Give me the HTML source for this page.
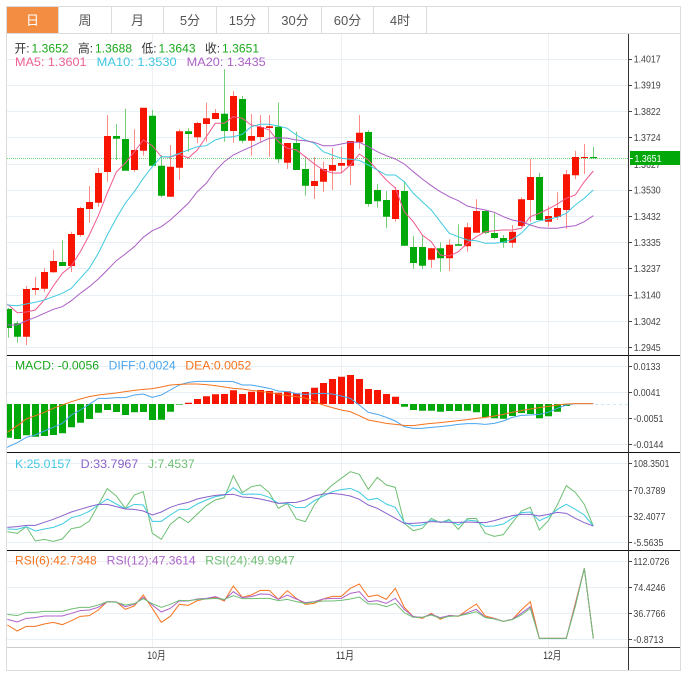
<!DOCTYPE html>
<html><head><meta charset="utf-8"><style>
html,body{margin:0;padding:0;background:#fff;width:690px;height:676px;overflow:hidden}
svg{display:block}
text{font-family:"Liberation Sans","Noto Sans CJK SC",sans-serif}
.t{font-size:13px;fill:#555;text-anchor:middle}
.l{font-size:12px}
.a{font-size:10px;fill:#444}
polyline{fill:none}
.n polyline{vector-effect:non-scaling-stroke;stroke-width:1}
</style></head><body>
<svg width="690" height="676" viewBox="0 0 690 676" xmlns="http://www.w3.org/2000/svg">
<defs><clipPath id="c"><rect x="7" y="34" width="621" height="613"/></clipPath></defs>
<rect x="6.5" y="6.5" width="674" height="664" fill="#fff" stroke="#dcdcdc"/>
<rect x="7" y="7" width="51" height="26" fill="#f38d42"/>
<path d="M7 33.5H680M58.5 7V33M111.5 7V33M163.5 7V33M216.5 7V33M268.5 7V33M321.5 7V33M373.5 7V33M426.5 7V33" stroke="#dcdcdc" fill="none"/>
<text x="32.5" y="25" class="t" style="fill:#fff">日</text>
<text x="85" y="25" class="t">周</text>
<text x="137.5" y="25" class="t">月</text>
<text x="190" y="25" class="t">5分</text>
<text x="242.5" y="25" class="t">15分</text>
<text x="295" y="25" class="t">30分</text>
<text x="347.5" y="25" class="t">60分</text>
<text x="400" y="25" class="t">4时</text>

<path d="M7 59.5H628M7 85.5H628M7 111.5H628M7 137.5H628M7 164.5H628M7 190.5H628M7 216.5H628M7 242.5H628M7 268.5H628M7 295.5H628M7 321.5H628M7 347.5H628M7 366.5H628M7 392.5H628M7 418.5H628M7 444.5H628M7 463.5H628M7 490.5H628M7 516.5H628M7 542.5H628M7 561.5H628M7 587.5H628M7 613.5H628M7 639.5H628" stroke="#e8eff5" fill="none"/>
<path d="M152.5 34V647M341.5 34V647M548.5 34V647" stroke="#edf1f5" fill="none"/>
<path d="M7 158.5H628" stroke="#6fd36f" stroke-dasharray="1 1" fill="none"/>
<path d="M595 404.5H628" stroke="#cfe8f8" stroke-dasharray="3 3" fill="none"/>

<g clip-path="url(#c)">
<path fill="none" stroke="#74d078" d="M8.5 308V337.7M17.5 321.3V342.7M62.5 240V266M116.5 124V160M125.5 108.7V170.7M152.5 110V165.7M161.5 155V197.3M188.5 128.3V151.7M224.5 69.3V141.7M242.5 96V143.3M278.5 102.7V163.3M296.5 131.7V170M305.5 156.7V195.7M368.5 130V206.7M377.5 184V207.7M386.5 191V228.3M404.5 181V245.7M413.5 235.7V269M422.5 235V269M440.5 242.3V271.7M458.5 224.3V245.7M485.5 210V234.3M494.5 213.3V239.3M503.5 235V247.7M539.5 172.7V220M593.5 146.7V157.7"/>
<path fill="none" stroke="#fb8b84" d="M26.5 286V345M35.5 277V295M44.5 268.3V291.7M53.5 250V272.7M71.5 231.7V272M80.5 206.7V236.7M89.5 186V222.7M98.5 167.7V206.7M107.5 115V181.7M134.5 129.3V171.7M143.5 107.7V155.7M170.5 145V196.7M179.5 129.3V180M197.5 121.7V143.3M206.5 102.7V141.7M215.5 109V119M233.5 91V142.7M251.5 114V155.7M260.5 115V141.7M269.5 115V156.7M287.5 143V169M314.5 157V199M323.5 161.7V191.7M332.5 148V190M341.5 147V172.7M350.5 141V185M359.5 115V149M395.5 187V221.7M431.5 247.7V268M449.5 239.3V271M467.5 222.7V251.7M476.5 199.3V232.7M512.5 225V247.7M521.5 197.3V226.7M530.5 159V221.7M548.5 206V226.7M557.5 192.3V220M566.5 170V229M575.5 150.7V179.3M584.5 144V174"/>
<path fill="none" stroke="#00a80a" stroke-width="7" d="M8.5 309V328M17.5 323.3V336.7M62.5 262V266M116.5 136V138.7M125.5 139V170.7M152.5 115.7V165.7M161.5 165.7V195.7M188.5 131.3V134M224.5 113.7V131M242.5 99V140.7M278.5 126.7V159.3M296.5 143V170M305.5 169V185.7M368.5 132V204M377.5 190V201.3M386.5 200V216.7M404.5 191V245.7M413.5 247V263M422.5 247V265.7M440.5 248.3V258.3M458.5 244.3V245.7M485.5 211V232.7M494.5 233V238M503.5 238V242.7M539.5 177V220M593.5 157V158.2"/>
<path fill="none" stroke="#f71400" stroke-width="7" d="M26.5 289V336.7M35.5 288V290M44.5 272V288.7M53.5 261V272.3M71.5 234V266M80.5 208V235M89.5 202V209M98.5 173V202.7M107.5 136V172M134.5 150V170M143.5 107.7V150.7M170.5 166.7V196.7M179.5 131.3V167.7M197.5 123V137.3M206.5 118.3V124M215.5 113V119M233.5 96V131M251.5 136V140.7M260.5 127V137M269.5 126.3V128M287.5 143V162.7M314.5 181V186M323.5 169V181.7M332.5 165V170.7M341.5 163V165.7M350.5 141V165.7M359.5 132.7V142.3M395.5 190V219M431.5 248.3V259.7M449.5 244.7V258.3M467.5 227.3V246.3M476.5 211V232.7M512.5 231.7V242.7M521.5 199.3V226M530.5 177V200M548.5 216V221.7M557.5 208V217M566.5 174.3V210M575.5 157V175.3M584.5 157V158"/>

<g transform="translate(.3 0)">
<polyline stroke="#ef5a8f" points="7,304 17,312.7 26,312 35,310 44,300 53,286 62,273.3 71,266 80,251.7 89,235 98,215.7 107,193 116,172 125,163 134,152 143,140 152,145.7 161,156.7 170,157.3 179,154 188,158 197,150 206,136.7 215,123.3 224,123.3 233,116.7 242,118.3 251,125 260,126.7 269,130 278,141.7 287,148.3 296,150 305,156.7 314,164 323,170 332,173 341,173 350,165 359,154 368,160 377,170 386,180 395,188 404,211.7 413,221.7 422,235 431,241.7 440,255 449,256 458,251.7 467,243.3 476,236.7 485,231.7 494,230.7 503,230 512,230 521,228.3 530,216.7 539,213.3 548,209 557,204 566,198.3 575,195 584,181.7 593,171"/>
<polyline stroke="#3fcbe0" points="7,305 17,305.7 26,304 35,302.3 44,300 53,296.7 62,293.3 71,288.3 80,278.3 89,268.3 98,253.3 107,235 116,218.3 125,203.3 134,191.7 143,178.3 152,166.7 161,156.7 170,156.7 179,153.3 188,150 197,146.7 206,145.7 215,140 224,137.3 233,136.7 242,134.3 251,126.7 260,124.3 269,124.3 278,126 287,128.3 296,135 305,140 314,143.3 323,151.7 332,155 341,158.3 350,159.3 359,160.3 368,165 377,170 386,175 395,175 404,181.7 413,193.3 422,201.7 431,210 440,221.7 449,233.3 458,236.7 467,240 476,240.7 485,243.3 494,243.3 503,242.3 512,239.3 521,233.3 530,224 539,220.7 548,219.3 557,217.3 566,213.3 575,205 584,198.3 593,190"/>
<polyline stroke="#ab5fc5" points="7,325 17,325 26,320.7 35,317.3 44,313.3 53,309.3 62,306.7 71,300.7 80,293.3 89,286.7 98,279 107,270 116,260.7 125,254 134,246.7 143,237.3 152,230.7 161,226.7 170,220 179,211.7 188,203.3 197,191.7 206,183.3 215,171 224,161.7 233,155 242,150.7 251,146.7 260,142.3 269,138.3 278,137.7 287,138.3 296,140 305,140.7 314,142.3 323,145.7 332,145.7 341,144 350,142.3 359,142.3 368,146.7 377,151.7 386,155.7 395,159 404,164 413,171.7 422,179 431,185.7 440,191.7 449,196.7 458,200.7 467,206 476,208.3 485,210 494,212.3 503,216.7 512,220 521,221.7 530,225 539,227.7 548,228.3 557,228.3 566,226.7 575,225.7 584,221.7 593,215.7"/>
</g>

<path fill="none" stroke="#00a80a" stroke-width="7" d="M8.5 404V437.7M17.5 404V439M26.5 404V435.3M35.5 404V436.7M44.5 404V436M53.5 404V435M62.5 404V433.3M71.5 404V427.3M80.5 404V422.7M89.5 404V419M98.5 404V412.7M107.5 404V410M116.5 404V412M125.5 404V415M134.5 404V412.3M143.5 404V412M152.5 404V420M161.5 404V419.7M170.5 404V411.7M179.5 404V404.6M404.5 404V406.7M413.5 404V410M422.5 404V410.7M431.5 404V410.7M440.5 404V411.7M449.5 404V411M458.5 404V411M467.5 404V410.7M476.5 404V412.3M485.5 404V417M494.5 404V418.3M503.5 404V418.7M512.5 404V416M521.5 404V413M530.5 404V414M539.5 404V418.3M548.5 404V416.3M557.5 404V411.7M566.5 404V406"/>
<path fill="none" stroke="#f71400" stroke-width="7" d="M188.5 404V402.7M197.5 404V399M206.5 404V396.3M215.5 404V394.3M224.5 404V394M233.5 404V390.3M242.5 404V394M251.5 404V391.7M260.5 404V390M269.5 404V391M278.5 404V392.7M287.5 404V391.3M296.5 404V393.3M305.5 404V392M314.5 404V387.7M323.5 404V383M332.5 404V379M341.5 404V376.7M350.5 404V375M359.5 404V379M368.5 404V389M377.5 404V390M386.5 404V394M395.5 404V396.7"/>

<g class="n" transform="translate(.3 355) scale(1 .33333)">
<polyline stroke="#4aa5ee" points="7,278 8,275 17,263 26,247 35,240 44,228 53,217 62,205 71,180 80,165 89,148 98,130 107,130 116,128 125,128 134,120 143,117 152,127 161,120 170,105 179,90 188,82 197,79 206,79 215,79 224,79 233,80 242,90 251,90 260,95 269,100 278,108 287,110 296,116 305,118 314,116 323,115 332,117 341,123 350,130 359,150 368,172 377,178 386,187 395,198 404,215 413,220 422,220 431,217 440,215 449,212 458,208 467,206 476,206 485,208 494,205 503,198 512,187 521,181 530,180 539,178 548,172 557,160 566,150 575,146 584,146 593,146"/>
<polyline stroke="#f5731e" points="7,232 17,212 26,192 35,182 44,172 53,160 62,150 71,140 80,132 89,125 98,120 107,117 116,114 125,110 134,106 143,103 152,101 161,96 170,90 179,88 188,87 197,87 206,89 215,92 224,96 233,100 242,102 251,106 260,109 269,113 278,117 287,122 296,125 305,129 314,140 323,150 332,158 341,165 350,170 359,182 368,195 377,200 386,205 395,208 404,211 413,212 422,208 431,205 440,203 449,200 458,197 467,194 476,190 485,187 494,183 503,178 512,172 521,167 530,162 539,158 548,154 557,150 566,147 575,146 584,146 593,146"/>
</g>
<g class="n" transform="translate(.3 450) scale(1 .33333)">
<polyline stroke="#6fbf73" points="7,245 17,250 26,230 35,273 44,268 53,274 62,267 71,236 80,231 89,213 98,165 107,116 116,138 125,175 134,135 143,125 152,250 161,268 170,223 179,201 188,218 197,192 206,167 215,150 224,143 233,77 242,128 251,110 260,105 269,128 278,175 287,160 296,207 305,215 314,165 323,130 332,105 341,85 350,65 359,73 368,118 377,82 386,105 395,112 404,220 413,242 422,235 431,205 440,218 449,208 458,238 467,206 476,205 485,250 494,259 503,254 512,218 521,183 530,172 539,240 548,212 557,165 566,107 575,127 584,163 593,228"/>
<polyline stroke="#3fcbe0" points="7,237 17,238 26,230 35,243 44,237 53,232 62,222 71,203 80,196 89,184 98,165 107,147 116,162 125,176 134,163 143,165 152,214 161,214 170,195 179,178 188,178 197,162 206,150 215,140 224,135 233,113 242,133 251,132 260,133 269,142 278,160 287,160 296,173 305,172 314,152 323,138 332,125 341,119 350,115 359,127 368,150 377,145 386,162 395,172 404,217 413,228 422,225 431,210 440,217 449,212 458,225 467,210 476,213 485,229 494,228 503,222 512,205 521,188 530,186 539,212 548,200 557,178 566,163 575,178 584,195 593,228"/>
<polyline stroke="#8a62cc" points="7,232 17,230 26,226 35,226 44,217 53,208 62,197 71,186 80,178 89,170 98,163 107,163 116,170 125,177 134,178 143,183 152,195 161,186 170,172 179,163 188,157 197,147 206,141 215,136 224,134 233,133 242,141 251,143 260,147 269,153 278,160 287,158 296,157 305,150 314,138 323,132 332,130 341,133 350,138 359,148 368,165 377,175 386,190 395,205 404,220 413,220 422,218 431,215 440,216 449,217 458,217 467,216 476,217 485,218 494,212 503,204 512,197 521,193 530,193 539,198 548,193 557,187 566,190 575,205 584,218 593,228"/>
</g>
<g class="n" transform="translate(.3 550) scale(1 .33333)">
<polyline stroke="#f5731e" points="7,225 17,243 26,229 35,229 44,222 53,217 62,224 71,212 80,199 89,197 98,180 107,155 116,156 125,178 134,168 143,135 152,175 161,217 170,199 179,163 188,166 197,152 206,146 215,142 224,153 233,108 242,142 251,135 260,121 269,121 278,148 287,122 296,145 305,163 314,160 323,147 332,139 341,139 350,115 359,102 368,140 377,135 386,148 395,115 404,172 413,200 422,205 431,190 440,208 449,196 458,199 467,180 476,162 485,198 494,205 503,214 512,208 521,180 530,155 539,265 548,265 557,265 566,265 575,160 584,55 593,265"/>
<polyline stroke="#ad62c8" points="7,208 17,216 26,205 35,203 44,198 53,198 62,198 71,190 80,182 89,180 98,172 107,155 116,156 125,170 134,163 143,142 152,165 161,186 170,175 179,153 188,153 197,147 206,145 215,140 224,150 233,125 242,143 251,140 260,132 269,133 278,148 287,135 296,147 305,158 314,155 323,147 332,145 341,145 350,130 359,125 368,155 377,152 386,160 395,145 404,178 413,200 422,202 431,193 440,203 449,197 458,198 467,188 476,178 485,202 494,206 503,214 512,208 521,190 530,170 539,265 548,265 557,265 566,265 575,165 584,55 593,265"/>
<polyline stroke="#6fbf73" points="7,193 17,197 26,187 35,187 44,184 53,184 62,184 71,177 80,172 89,172 98,165 107,155 116,157 125,165 134,161 143,146 152,161 161,172 170,163 179,151 188,152 197,149 206,147 215,145 224,148 233,137 242,146 251,146 260,145 269,145 278,152 287,148 296,155 305,160 314,156 323,153 332,153 341,151 350,147 359,141 368,162 377,162 386,170 395,160 404,188 413,202 422,202 431,195 440,205 449,199 458,198 467,192 476,185 485,203 494,207 503,214 512,209 521,195 530,175 539,265 548,265 557,265 566,265 575,170 584,55 593,265"/>
</g>
</g>

<path d="M7 355.5H680M7 452.5H680M7 550.5H680" stroke="#111" fill="none"/>
<path d="M7 647.5H628" stroke="#ccc" fill="none"/>
<path d="M628 647.5H680M628.5 34V670" stroke="#333" fill="none"/>
<path d="M629 59.5h3M629 85.5h3M629 111.5h3M629 137.5h3M629 190.5h3M629 216.5h3M629 242.5h3M629 268.5h3M629 295.5h3M629 321.5h3M629 347.5h3M629 366.5h3M629 392.5h3M629 418.5h3M629 444.5h3M629 463.5h3M629 490.5h3M629 516.5h3M629 542.5h3M629 561.5h3M629 587.5h3M629 613.5h3M629 639.5h3" stroke="#444" fill="none"/>

<g class="a">
<text x="633.7" y="62.5" textLength="27" lengthAdjust="spacingAndGlyphs">1.4017</text>
<text x="633.7" y="88.5" textLength="27" lengthAdjust="spacingAndGlyphs">1.3919</text>
<text x="633.7" y="115" textLength="27" lengthAdjust="spacingAndGlyphs">1.3822</text>
<text x="633.7" y="141" textLength="27" lengthAdjust="spacingAndGlyphs">1.3724</text>
<text x="633.7" y="168" textLength="27" lengthAdjust="spacingAndGlyphs">1.3627</text>
<text x="633.7" y="193.5" textLength="27" lengthAdjust="spacingAndGlyphs">1.3530</text>
<text x="633.7" y="220" textLength="27" lengthAdjust="spacingAndGlyphs">1.3432</text>
<text x="633.7" y="246" textLength="27" lengthAdjust="spacingAndGlyphs">1.3335</text>
<text x="633.7" y="272" textLength="27" lengthAdjust="spacingAndGlyphs">1.3237</text>
<text x="633.7" y="298.5" textLength="27" lengthAdjust="spacingAndGlyphs">1.3140</text>
<text x="633.7" y="325" textLength="27" lengthAdjust="spacingAndGlyphs">1.3042</text>
<text x="633.7" y="351" textLength="27" lengthAdjust="spacingAndGlyphs">1.2945</text>
<text x="633.4" y="370" textLength="27" lengthAdjust="spacingAndGlyphs">0.0133</text>
<text x="633.4" y="396" textLength="27" lengthAdjust="spacingAndGlyphs">0.0041</text>
<text x="633.4" y="422" textLength="30" lengthAdjust="spacingAndGlyphs">-0.0051</text>
<text x="633.4" y="448" textLength="30" lengthAdjust="spacingAndGlyphs">-0.0144</text>
<text x="633.4" y="467" textLength="36" lengthAdjust="spacingAndGlyphs">108.3501</text>
<text x="633.4" y="494" textLength="32" lengthAdjust="spacingAndGlyphs">70.3789</text>
<text x="633.4" y="520" textLength="32" lengthAdjust="spacingAndGlyphs">32.4077</text>
<text x="633.4" y="546" textLength="30" lengthAdjust="spacingAndGlyphs">-5.5635</text>
<text x="633.4" y="565" textLength="36" lengthAdjust="spacingAndGlyphs">112.0726</text>
<text x="633.4" y="591" textLength="32" lengthAdjust="spacingAndGlyphs">74.4246</text>
<text x="633.4" y="617" textLength="32" lengthAdjust="spacingAndGlyphs">36.7766</text>
<text x="633.4" y="643" textLength="30" lengthAdjust="spacingAndGlyphs">-0.8713</text>
</g>

<rect x="630" y="151" width="50" height="14" fill="#00a80a"/>
<path d="M630 158.5h3" stroke="#fff"/>
<text x="634.5" y="162" style="font-size:10px;fill:#fff" textLength="27" lengthAdjust="spacingAndGlyphs">1.3651</text>

<g class="l">
<text x="14.5" y="52.5" fill="#333" textLength="15" lengthAdjust="spacingAndGlyphs">开:</text>
<text x="31.5" y="52.5" fill="#1aa81a" textLength="37">1.3652</text>
<text x="78" y="52.5" fill="#333" textLength="15" lengthAdjust="spacingAndGlyphs">高:</text>
<text x="95" y="52.5" fill="#1aa81a" textLength="37">1.3688</text>
<text x="141.5" y="52.5" fill="#333" textLength="15" lengthAdjust="spacingAndGlyphs">低:</text>
<text x="158.5" y="52.5" fill="#1aa81a" textLength="37">1.3643</text>
<text x="205" y="52.5" fill="#333" textLength="15" lengthAdjust="spacingAndGlyphs">收:</text>
<text x="222" y="52.5" fill="#1aa81a" textLength="37">1.3651</text>
<text x="15" y="66" fill="#ef5f91" textLength="71.5" lengthAdjust="spacingAndGlyphs">MA5: 1.3601</text>
<text x="96.7" y="66" fill="#41c7e3" textLength="80" lengthAdjust="spacingAndGlyphs">MA10: 1.3530</text>
<text x="186.7" y="66" fill="#ad62c8" textLength="79" lengthAdjust="spacingAndGlyphs">MA20: 1.3435</text>
<text x="15" y="369.7" fill="#1aa81a" textLength="84" lengthAdjust="spacingAndGlyphs">MACD: -0.0056</text>
<text x="108.7" y="369.7" fill="#4aa5ee" textLength="67" lengthAdjust="spacingAndGlyphs">DIFF:0.0024</text>
<text x="185.3" y="369.7" fill="#f5731e" textLength="66" lengthAdjust="spacingAndGlyphs">DEA:0.0052</text>
<text x="15" y="468" fill="#41c7e3" textLength="56" lengthAdjust="spacingAndGlyphs">K:25.0157</text>
<text x="80.7" y="468" fill="#8a62cc" textLength="57.6" lengthAdjust="spacingAndGlyphs">D:33.7967</text>
<text x="148" y="468" fill="#6fbf73" textLength="46.7" lengthAdjust="spacingAndGlyphs">J:7.4537</text>
<text x="15" y="564.7" fill="#f5731e" textLength="81.7" lengthAdjust="spacingAndGlyphs">RSI(6):42.7348</text>
<text x="106.7" y="564.7" fill="#ad62c8" textLength="89" lengthAdjust="spacingAndGlyphs">RSI(12):47.3614</text>
<text x="205.3" y="564.7" fill="#6fbf73" textLength="89.4" lengthAdjust="spacingAndGlyphs">RSI(24):49.9947</text>
</g>
<g style="font-size:11px" fill="#333">
<text x="147.3" y="659" textLength="18.4" lengthAdjust="spacingAndGlyphs">10月</text>
<text x="336" y="659" textLength="18" lengthAdjust="spacingAndGlyphs">11月</text>
<text x="543.3" y="659" textLength="18" lengthAdjust="spacingAndGlyphs">12月</text>
</g>
</svg>
</body></html>
